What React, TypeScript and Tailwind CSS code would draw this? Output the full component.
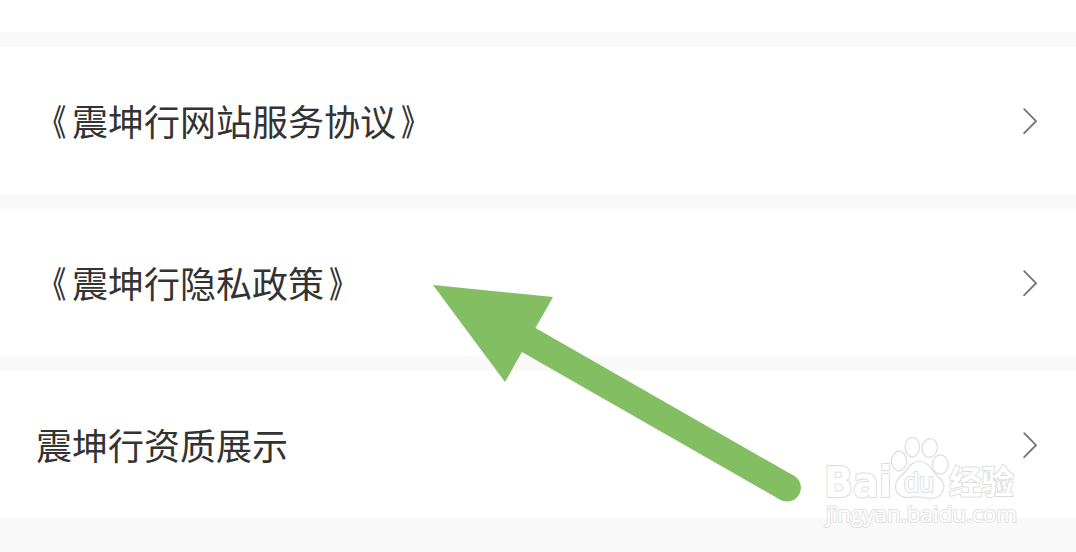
// Lista de documentos legales, con una flecha que señala la política de privacidad.

const DOCUMENTOS = [
  { titulo: '震坤行网站服务协议', entreComillas: true },
  { titulo: '震坤行隐私政策', entreComillas: true },
  { titulo: '震坤行资质展示', entreComillas: false },
]

function Chevron() {
  return (
    <svg width="16" height="28" viewBox="0 0 16 28" fill="none" stroke="#777777" strokeWidth="1.9" strokeLinecap="round" aria-hidden="true">
      <path d="M2.2 2.2L14 14.2L2.2 26.2" />
    </svg>
  )
}

function Fila({ titulo, entreComillas }: { titulo: string; entreComillas: boolean }) {
  return (
    <button type="button" className="flex h-[147px] w-full items-center justify-between bg-white pr-[38px] pl-9 text-left">
      <span className="pb-0.5 text-[36px] leading-none whitespace-nowrap text-[#333333]">
        {entreComillas && <span className="inline-block -translate-x-[1.2px] scale-x-[0.74] font-medium">《</span>}
        {titulo}
        {entreComillas && <span className="inline-block translate-x-[0.5px] scale-x-[0.74] font-medium">》</span>}
      </span>
      <Chevron />
    </button>
  )
}

function Flecha() {
  return (
    <svg className="pointer-events-none absolute inset-0" width="1076" height="552" viewBox="0 0 1076 552" aria-hidden="true">
      <path d="M433 285L553 297L505 382Z" fill="#84be62" />
      <path d="M527 339L787.5 488" stroke="#84be62" strokeWidth="27.5" strokeLinecap="butt" />
      <circle cx="787.2" cy="487.8" r="13.7" fill="#84be62" />
    </svg>
  )
}

function MarcaDeAgua() {
  return (
    <svg
      className="pointer-events-none absolute top-[430px] left-[815px]"
      width="215"
      height="105"
      viewBox="0 0 215 105"
      fill="#ffffff"
      stroke="#dddddd"
      strokeWidth="1.2"
      strokeLinejoin="round"
    >
      <text x="9" y="66.5" fontFamily="'DejaVu Sans', sans-serif" fontWeight="700" fontSize="42" strokeWidth="2.2" paintOrder="stroke" textLength="68" lengthAdjust="spacingAndGlyphs">Bai</text>
      <ellipse cx="84" cy="31" rx="7.6" ry="9.8" />
      <ellipse cx="97.3" cy="17" rx="7.2" ry="9.8" />
      <ellipse cx="114.7" cy="18" rx="7.6" ry="9.4" transform="rotate(10 114.7 18)" />
      <ellipse cx="125.3" cy="34.5" rx="7.8" ry="9.6" />
      <path d="M104 31.5C97 31.5 94 37 90 42C86 46 80 50 80.5 57C81 64 86 68 93 67.5C98 67 101 66.5 105 67C110 68 114 69 119 68C126 67 129 61 129 56C128 49 122 47 118 41C114 35 111 31.5 104 31.5Z" />
      <text x="89" y="62" fontFamily="'Liberation Sans', Arial, sans-serif" fontSize="27" strokeWidth="2" paintOrder="stroke" textLength="30" lengthAdjust="spacingAndGlyphs">du</text>
      <text x="134" y="64" fontFamily="'Noto Sans CJK SC', sans-serif" fontWeight="700" fontSize="32.5" strokeWidth="2" paintOrder="stroke">经验</text>
      <text x="11" y="92" fontFamily="'Open Sans', 'Noto Sans', sans-serif" fontSize="21" stroke="#e2e2e2" strokeWidth="2" paintOrder="stroke" textLength="191" lengthAdjust="spacingAndGlyphs">jingyan.baidu.com</text>
    </svg>
  )
}

export default function App() {
  return (
    <div className="relative flex h-[552px] w-[1076px] flex-col gap-[15px] overflow-hidden bg-[#f9f9f9] font-['Noto_Sans_CJK_SC',sans-serif]">
      <div className="h-8 flex-none bg-white" />
      {DOCUMENTOS.map((d) => (
        <Fila key={d.titulo} titulo={d.titulo} entreComillas={d.entreComillas} />
      ))}
      <Flecha />
      <MarcaDeAgua />
    </div>
  )
}
